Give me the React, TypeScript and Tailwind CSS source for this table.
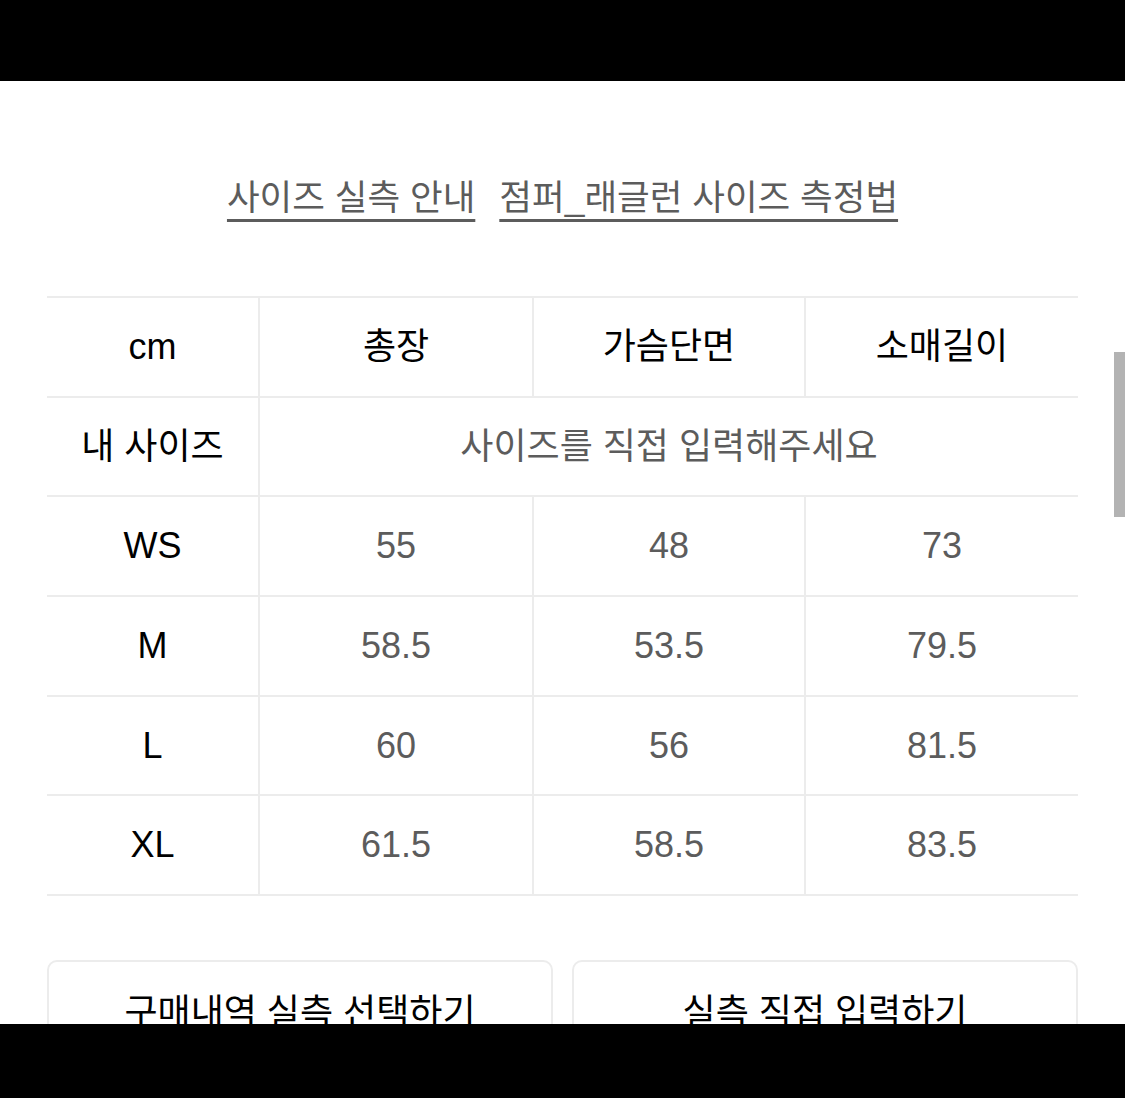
import React from "react";

const font = { fontFamily: '"Liberation Sans", "Noto Sans CJK KR", sans-serif' };

const columns = ["총장", "가슴단면", "소매길이"];

const sizes = [
  { name: "WS", values: ["55", "48", "73"], h: "h-[100px]" },
  { name: "M", values: ["58.5", "53.5", "79.5"], h: "h-[100px]" },
  { name: "L", values: ["60", "56", "81.5"], h: "h-[99px]" },
  { name: "XL", values: ["61.5", "58.5", "83.5"], h: "h-[100px]" },
];

const App = () => {
  return (
    <div
      className="relative flex h-[1098px] w-[1125px] flex-col overflow-hidden bg-white"
      style={font}
    >
      <div className="h-[81px] shrink-0 bg-black" />

      <main className="flex-1 overflow-hidden px-[47px]">
        {/* guide links */}
        <div className="mt-[95px] flex justify-center gap-6 text-[35.5px] leading-[44px] text-[#5c5c5c]">
          <span className="underline decoration-[3px] underline-offset-[9px]">사이즈 실측 안내</span>
          <span className="underline decoration-[3px] underline-offset-[9px]">점퍼_래글런 사이즈 측정법</span>
        </div>

        {/* size table */}
        <div className="mt-[76px] border-t-2 border-[#ececec] text-[36px]">
          <div className="grid h-[100px] grid-cols-[213px_274px_272px_272px] border-b-2 border-[#ececec] text-black">
            <div className="flex items-center justify-center border-r-2 border-[#ececec]">cm</div>
            {columns.map((c, i) => (
              <div
                key={c}
                className={`flex items-center justify-center ${i < 2 ? "border-r-2 border-[#ececec]" : ""}`}
              >
                {c}
              </div>
            ))}
          </div>

          <div className="grid h-[99px] grid-cols-[213px_818px] border-b-2 border-[#ececec]">
            <div className="flex items-center justify-center border-r-2 border-[#ececec] text-black">내 사이즈</div>
            <div className="flex items-center justify-center text-[#5c5c5c]">사이즈를 직접 입력해주세요</div>
          </div>

          {sizes.map((s) => (
            <div
              key={s.name}
              className={`grid grid-cols-[213px_274px_272px_272px] border-b-2 border-[#ececec] ${s.h}`}
            >
              <div className="flex items-center justify-center border-r-2 border-[#ececec] text-black">{s.name}</div>
              {s.values.map((v, i) => (
                <div
                  key={i}
                  className={`flex items-center justify-center text-[#5c5c5c] ${i < 2 ? "border-r-2 border-[#ececec]" : ""}`}
                >
                  {v}
                </div>
              ))}
            </div>
          ))}
        </div>

        {/* actions */}
        <div className="mt-[64px] flex gap-[19px]">
          <button className="h-[100px] flex-1 rounded-[10px] border-2 border-[#ececec] bg-white pt-[6px] text-[36px] text-black">
            구매내역 실측 선택하기
          </button>
          <button className="h-[100px] flex-1 rounded-[10px] border-2 border-[#ececec] bg-white pt-[6px] text-[36px] text-black">
            실측 직접 입력하기
          </button>
        </div>
      </main>

      <div className="h-[74px] shrink-0 bg-black" />

      {/* scrollbar thumb */}
      <div className="absolute right-0 top-[352px] h-[165px] w-[11px] bg-[#b3b3b3]" />
    </div>
  );
};

export default App;
